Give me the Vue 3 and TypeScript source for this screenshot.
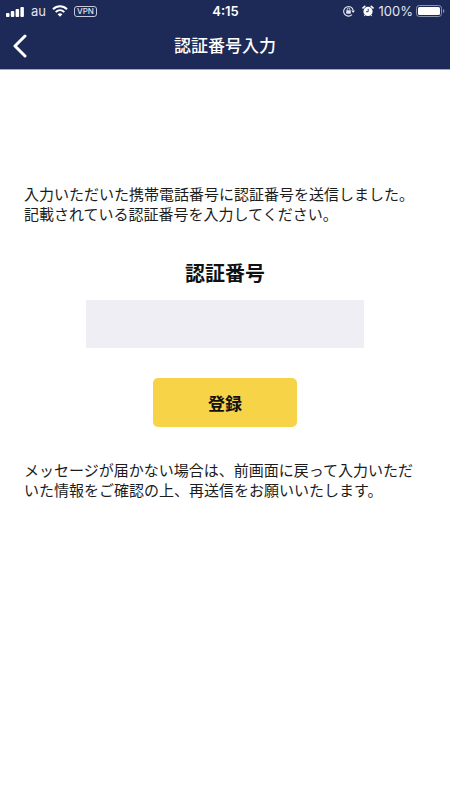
<script setup lang="ts">
import { ref } from 'vue'

const code = ref<string>('')
const signalBars: number[] = [4, 6, 8, 10]
</script>

<template>
  <div class="screen">
    <header class="top">
      <div class="status">
        <div class="status-side">
          <svg class="signal" width="18" height="11" viewBox="0 0 18 11" aria-hidden="true">
            <rect v-for="(h, i) in signalBars" :key="h" :x="i * 4.8" :y="11 - h" width="3.5" :height="h" rx="0.9" fill="#fff" />
          </svg>
          <span class="carrier">au</span>
          <svg class="wifi" width="16" height="12" viewBox="0 0 16 12" fill="none" stroke="#fff" stroke-width="2" aria-hidden="true">
            <path d="M1 4.3C5 .3 11 .3 15 4.3" />
            <path d="M3.7 7.1C6.2 4.7 9.8 4.7 12.3 7.1" />
            <path d="M8 11.8L5.6 9.2C7 7.9 9 7.9 10.4 9.2Z" fill="#fff" stroke="none" />
          </svg>
          <span class="vpn">VPN</span>
        </div>
        <span class="clock">4:15</span>
        <div class="status-side right">
          <svg width="12" height="12" viewBox="0 0 12 12" fill="none" stroke="#e3e5ee" aria-hidden="true">
            <path d="M9 9.6A4.8 4.8 0 1 1 10.2 5.4" stroke-width="1.1" />
            <path d="M8.2 5.4H12L10.2 8Z" fill="#e3e5ee" stroke="none" />
            <rect x="3.2" y="5.3" width="4.6" height="3.4" rx="0.4" fill="#e3e5ee" stroke="none" />
            <path d="M4.2 5.5V4.3A1.3 1.3 0 0 1 6.8 4.3V5.5" stroke-width="0.9" />
          </svg>
          <svg class="alarm" width="12" height="12" viewBox="0 0 12 12" fill="none" aria-hidden="true">
            <path d="M1 2.9L2.8 1.3M9.2 1.3L11 2.9" stroke="#fff" stroke-width="1.6" stroke-linecap="round" />
            <path d="M3.2 9.8L2.5 10.8M8.8 9.8L9.5 10.8" stroke="#fff" stroke-linecap="round" />
            <circle cx="6" cy="6.4" r="4.6" fill="#fff" />
            <path d="M6.2 3.8V6.7H4" stroke="#1d2957" stroke-width="0.9" />
          </svg>
          <span class="percent">100%</span>
          <svg width="29" height="12" viewBox="0 0 29 12" aria-hidden="true">
            <rect x="0.5" y="0.5" width="25" height="11" rx="2.8" fill="none" stroke="#8c93ad" />
            <rect x="2" y="2" width="22" height="8" rx="1.6" fill="#fff" />
            <path d="M27 4V8Q28.4 7.4 28.4 6T27 4Z" fill="#8c93ad" />
          </svg>
        </div>
      </div>
      <nav class="bar">
        <button class="back" type="button" aria-label="戻る">
          <svg width="14" height="24" viewBox="0 0 14 24" fill="none" stroke="#fff" stroke-width="3" stroke-linecap="round" stroke-linejoin="round" aria-hidden="true">
            <path d="M12 2L2 12L12 22" />
          </svg>
        </button>
        <h1 class="title">認証番号入力</h1>
      </nav>
    </header>

    <main class="content">
      <p class="note">入力いただいた携帯電話番号に認証番号を送信しました。<br />記載されている認証番号を入力してください。</p>
      <form class="form" @submit.prevent>
        <label class="label" for="code">認証番号</label>
        <input id="code" v-model="code" class="field" type="text" inputmode="numeric" autocomplete="one-time-code" />
        <button class="submit" type="submit">登録</button>
      </form>
      <p class="note">メッセージが届かない場合は、前画面に戻って入力いただいた情報をご確認の上、再送信をお願いいたします。</p>
    </main>
  </div>
</template>

<style>
body {
  background: #fff;
}
</style>

<style scoped>
.screen {
  font-family: Inter, "Noto Sans CJK JP", sans-serif;
  color: #1c1c1c;
}
.top {
  background: #1d2957;
  color: #fff;
  border-bottom: 1px solid #a5a9bc;
}
.status {
  display: grid;
  grid-template-columns: 1fr auto 1fr;
  align-items: center;
  height: 22px;
  padding: 0 5px 0 6px;
}
.status-side {
  display: flex;
  align-items: center;
}
.right {
  justify-content: flex-end;
}
.carrier {
  margin-left: 7px;
  font-size: 13px;
  line-height: 16px;
  color: #e3e5ee;
}
.wifi {
  margin: 0 6px;
}
.vpn {
  padding: 0 2px;
  border: 1px solid #c5c9d9;
  border-radius: 3px;
  font-size: 8px;
  font-weight: 500;
  line-height: 9px;
  color: #dfe2ec;
}
.clock {
  font-size: 13px;
  font-weight: 600;
  line-height: 16px;
}
.alarm {
  margin: 0 5px 0 7px;
}
.percent {
  margin-right: 3px;
  font-size: 13px;
  line-height: 16px;
  color: #e3e5ee;
}
.bar {
  display: grid;
  grid-template-columns: 40px 1fr 40px;
  align-items: center;
  height: 47px;
}
.back {
  display: flex;
  justify-content: center;
  padding: 0;
  border: 0;
  background: none;
}
.title {
  margin: 0;
  font-size: 17px;
  font-weight: 500;
  line-height: 24px;
  text-align: center;
}
.content {
  padding: 115px 24px 24px;
}
.note {
  margin: 0;
  font-size: 15px;
  line-height: 20px;
}
.form {
  display: flex;
  flex-direction: column;
  align-items: center;
  padding: 34px 0;
}
.label {
  font-size: 20px;
  font-weight: 700;
  line-height: 30px;
  color: #111;
}
.field {
  box-sizing: border-box;
  width: 69%;
  height: 48px;
  margin: 11px 0 30px;
  padding: 0 12px;
  border: 0;
  border-radius: 0;
  background: #efeef4;
  font: inherit;
  font-size: 20px;
}
.submit {
  width: 36%;
  height: 49px;
  padding: 0;
  border: 0;
  border-radius: 5px;
  background: #f7d348;
  color: #111;
  font-family: inherit;
  font-size: 17px;
  font-weight: 700;
}
</style>
